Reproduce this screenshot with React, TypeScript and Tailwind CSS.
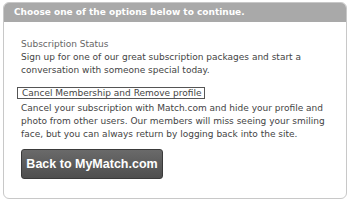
export default function App() {
  return (
    <div className="w-[350px] h-[200px] bg-white pt-[2px] pl-[3px]" style={{ fontFamily: '"DejaVu Sans", Verdana, sans-serif' }}>
      <div className="w-[344px] h-[197px] border border-[#c8c8c8] rounded-[6px] overflow-hidden flex flex-col">
        <div className="h-[19px] shrink-0 bg-[#a9a9a9] text-white font-bold text-[9px] pl-[10px] flex items-center">
          Choose one of the options below to continue.
        </div>
        <div className="pl-[17px] pt-[16px] text-[9px] leading-[13px] text-[#444]">
          <div className="text-[#666]">Subscription Status</div>
          <div>Sign up for one of our great subscription packages and start a<br />conversation with someone special today.</div>
          <div className="mt-[10px] -ml-[4px] inline-block border border-[#555] pl-[4px] pr-[3px] h-[12px] leading-[10px] text-[#444]">Cancel Membership and Remove profile</div>
          <div className="mt-[2px]">Cancel your subscription with Match.com and hide your profile and<br />photo from other users. Our members will miss seeing your smiling<br />face, but you can always return by logging back into the site.</div>
          <button className="mt-[8px] w-[142px] h-[30px] rounded-[3px] border border-[#3a3a3a] bg-gradient-to-b from-[#6a6a6a] to-[#4e4e4e] text-white font-bold text-[12.5px] whitespace-nowrap" style={{ fontFamily: '"Liberation Sans", Arial, sans-serif' }}>
            Back to MyMatch.com
          </button>
        </div>
      </div>
    </div>
  );
}
